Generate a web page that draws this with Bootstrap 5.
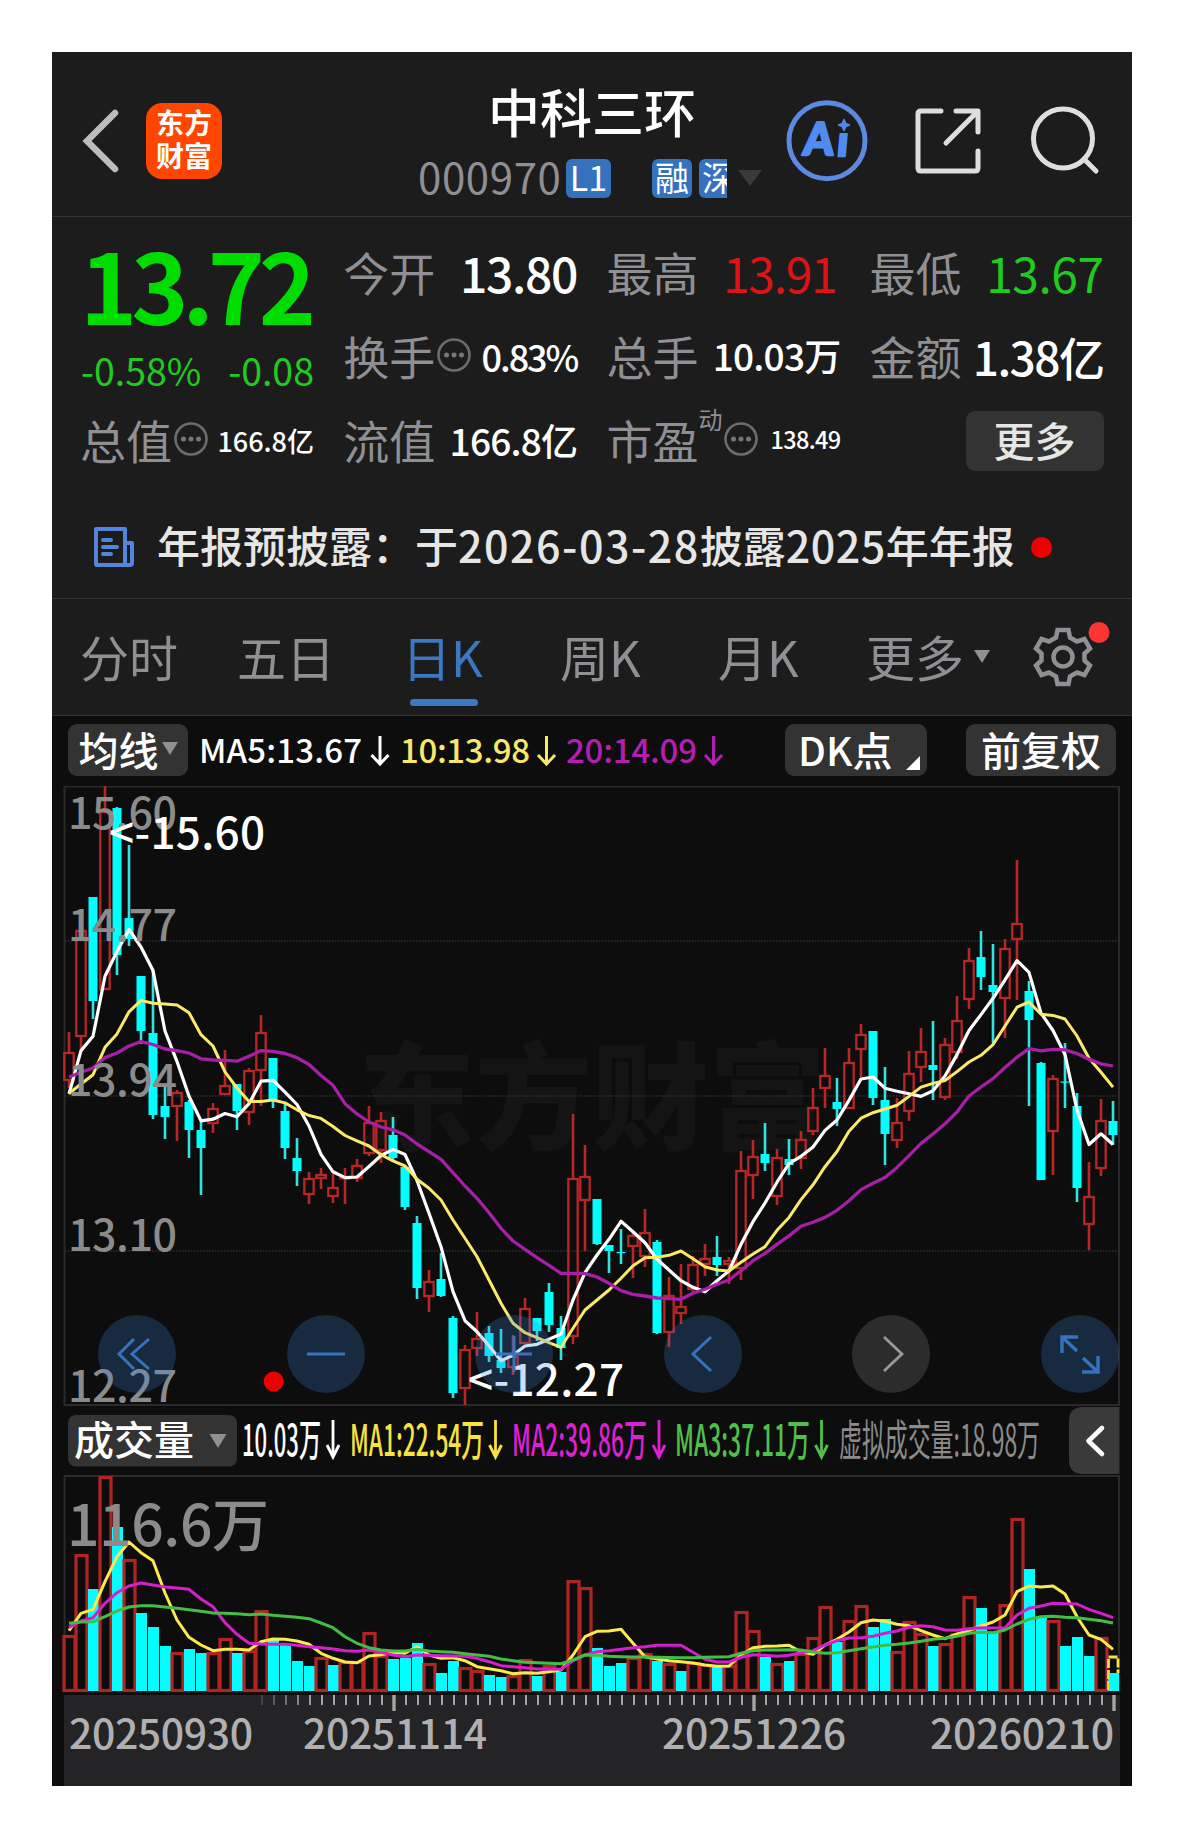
<!DOCTYPE html>
<html lang="zh-CN">
<head>
<meta charset="utf-8">
<meta name="viewport" content="width=device-width, initial-scale=1">
<title>中科三环 000970</title>
<link rel="stylesheet" href="https://cdn.jsdelivr.net/npm/bootstrap@5.3.0/dist/css/bootstrap.min.css">
<style>
body{background:#fff;font-family:"Noto Sans CJK SC",sans-serif;font-weight:500;line-height:1;color:#fff;width:1184px;height:1838px;overflow:hidden}
svg{display:block;flex:none}
.phone{width:1080px;height:1734px;margin:52px;background:#1c1c1c;overflow:hidden}
.rule-b{border-bottom:1px solid #353535}
.top-bar{height:165px;padding:0 0 0 30px}
.top-bar>*{flex:none}
.app-logo{width:76px;height:76px;margin-left:27px;border-radius:16px;background:#ff4500;font-size:28px;line-height:33px;font-weight:700;padding-top:3px;margin-top:13px}
.stock-id{width:345px;margin-left:196px;margin-top:15px}
.stock-name{font-size:52px;height:52px;padding-left:3px;margin-top:-1px}
.stock-code{font-size:42px;font-weight:400;color:#8f8f94;letter-spacing:.6px;width:148px;margin-top:-4px}
.tag-blue{height:39px;border-radius:6px;background:#3472bd;font-size:34px;font-weight:400;flex:none}
.tag-blue span{margin-top:-3px}
.tag-clip{width:28px;overflow:hidden;border-radius:6px 0 0 6px;padding-left:3px}
.tri{width:0;height:0;border:solid transparent;border-bottom-width:0}
.quote{display:grid;grid-template-columns:repeat(4,233px);grid-template-rows:repeat(3,84.3px);column-gap:30.2px;padding:12px 28px 0 29px;height:297px}
.quote .big{grid-row:span 2}
.cell-q{display:flex;align-items:center;justify-content:space-between;white-space:nowrap}
.cell-q>span:last-child{padding-top:1px}
.lbl{font-size:46px;font-weight:400;color:#8f8f94;display:flex;align-items:center;margin:-1px 0 0 -1px}
.lbl svg{margin-left:1px}
.price-now{font-size:97px;font-weight:700;color:#00db00;letter-spacing:-6.1px;height:97px;margin:5px 0 0 -1px}
.up{color:#dc1414!important}.down{color:#20cb20!important}
.f48{font-size:48px;letter-spacing:-1.3px}.f45{font-size:46px;letter-spacing:-1.5px}.f37{font-size:37px;letter-spacing:-.8px}.f27{font-size:27px}.f23{font-size:23.5px;letter-spacing:-.7px}
.f36{font-size:36px;letter-spacing:-2.1px}
.pct{font-size:37.5px;font-weight:400;margin-top:20px}
.sup-d{font-size:24px;align-self:flex-start;margin-top:-9px}
.btn-dark2{background:#333;border-radius:9px;color:#e6e6e6;padding:0 0 3px;line-height:1;font-weight:500;display:flex;align-items:center;justify-content:center}
.notice{height:85px;padding-left:42px;font-size:43px;color:#e6e6e6;white-space:nowrap}
.dg{letter-spacing:1.5px}.dy{letter-spacing:.5px}
.dot{width:21px;height:21px;border-radius:50%;background:#ee0000}
.tabs-k{height:117px;font-size:49px;font-weight:400;color:#8f8f94;padding-left:28px}
.tabs-k>*{flex:none}
.tabs-k .nav-link{padding:0 0 4px;color:inherit;height:116px;display:flex;align-items:center;white-space:nowrap;position:relative}
.tabs-k .active{color:#3a78c2;text-indent:-7px}
.tabs-k .active::after{content:"";position:absolute;left:1px;bottom:9px;width:68px;height:7px;border-radius:4px;background:#3a78c2}
.chart-zone{background:#0d0d0d;height:1070px}
.ma-bar{height:70px;padding:8px 16px 0;font-size:33px;white-space:nowrap}
.ma-bar .btn-dark2{color:#fff;height:52px;font-size:40px}
.chart-svg text{font-family:"Noto Sans CJK SC",sans-serif}
</style>
<script src="https://cdn.jsdelivr.net/npm/bootstrap@5.3.0/dist/js/bootstrap.bundle.min.js"></script>
</head>
<body>
<main class="phone">
  <header class="top-bar rule-b d-flex align-items-center">
    <svg width="37" height="66" viewBox="0 0 37 66" style="margin-top:13px"><path d="M33 5 5 33l28 28" fill="none" stroke="#bdbdbd" stroke-width="6.5" stroke-linecap="round"/></svg>
    <div class="app-logo text-center">东方<br>财富</div>
    <div class="stock-id">
      <div class="stock-name text-center">中科三环</div>
      <div class="d-flex align-items-center" style="margin-top:22px">
        <span class="stock-code">000970</span>
        <span class="tag-blue d-flex align-items-center justify-content-center" style="width:45px"><span>L1</span></span>
        <span class="tag-blue d-flex align-items-center justify-content-center" style="width:40px;margin-left:41px"><span>融</span></span>
        <span class="tag-blue tag-clip d-flex align-items-center" style="margin-left:7px"><span>深</span></span>
        <i class="tri" style="border-width:16px 12px 0;border-top-color:#3a3a3a;margin-left:11px"></i>
      </div>
    </div>
    <svg width="350" height="90" viewBox="765 96 350 90" style="margin-left:2px;margin-top:14px" fill="none" stroke="#dedede" stroke-width="5" stroke-linecap="round" stroke-linejoin="round">
      <g stroke="#5b8ade"><circle cx="827" cy="140.700" r="38"/></g>
      <g fill="#4f8bf0" stroke="#4f8bf0" stroke-width="2.500"><text x="802" y="155" font-family="Lato, sans-serif" font-weight="900" font-size="45" textLength="30" lengthAdjust="spacingAndGlyphs" transform="translate(14 0) skewX(-5)">A</text><text x="836" y="156.500" font-family="Lato, sans-serif" font-weight="900" font-size="42" textLength="11" transform="translate(14 0) skewX(-5)">ı</text><path d="M844 119.500l1.600 3.900 3.900 1.600-3.900 1.600-1.600 3.900-1.600-3.900-3.900-1.600 3.900-1.600z" stroke-width="1.500"/></g>
      <path d="M941 111H921q-3 0-3 3V168q0 3 3 3H975q3 0 3-3V151M956 111H978V132M977 112 946 143"/>
      <circle cx="1063" cy="138.500" r="29.500"/><path d="M1084 159 1096 171"/>
    </svg>
  </header>

  <section class="quote">
    <div class="big">
      <div class="price-now">13.72</div>
      <div class="d-flex justify-content-between pct down"><span>-0.58%</span><span>-0.08</span></div>
    </div>
    <div class="cell-q"><span class="lbl">今开</span><span class="f48">13.80</span></div>
    <div class="cell-q"><span class="lbl">最高</span><span class="f48 up" style="font-weight:400;padding-right:4px">13.91</span></div>
    <div class="cell-q"><span class="lbl">最低</span><span class="f48 down" style="font-weight:400;letter-spacing:-.5px">13.67</span></div>
    <div class="cell-q"><span class="lbl">换手<svg width="36" height="36" viewBox="-18 -18 36 36"><circle r="15.500" fill="none" stroke="#6c6c6c" stroke-width="2.600"/><g fill="#777"><circle cx="-7.500" r="2.500"/><circle r="2.500"/><circle cx="7.500" r="2.500"/></g></svg></span><span class="f36">0.83%</span></div>
    <div class="cell-q"><span class="lbl">总手</span><span class="f37">10.03万</span></div>
    <div class="cell-q"><span class="lbl">金额</span><span class="f45">1.38亿</span></div>
    <div class="cell-q"><span class="lbl">总值<svg width="36" height="36" viewBox="-18 -18 36 36"><circle r="15.500" fill="none" stroke="#6c6c6c" stroke-width="2.600"/><g fill="#777"><circle cx="-7.500" r="2.500"/><circle r="2.500"/><circle cx="7.500" r="2.500"/></g></svg></span><span class="f27">166.8亿</span></div>
    <div class="cell-q"><span class="lbl">流值</span><span class="f37">166.8亿</span></div>
    <div class="cell-q"><span class="lbl">市盈<span class="sup-d">动</span><svg width="36" height="36" viewBox="-18 -18 36 36"><circle r="15.500" fill="none" stroke="#6c6c6c" stroke-width="2.600"/><g fill="#777"><circle cx="-7.500" r="2.500"/><circle r="2.500"/><circle cx="7.500" r="2.500"/></g></svg></span><span class="f23">138.49</span></div>
    <div class="d-flex align-items-center justify-content-end"><button class="btn btn-dark2" style="width:138px;height:60px;font-size:41px;margin-top:2px">更多</button></div>
  </section>

  <section class="notice rule-b d-flex align-items-start">
    <svg width="40" height="42" viewBox="0 0 40 42" style="margin-top:12px" fill="none" stroke="#5285de" stroke-width="4" stroke-linejoin="round" stroke-linecap="round"><path d="M2 3H31V39H3Q2 39 2 38zM31 17H38V37Q38 39 36 39H31M9 14H17M9 21H23M9 28H17"/></svg>
    <span style="margin:9px 0 0 23px">年报预披露：于<span class="dg">2026-03-28</span>披露<span class="dy">2025</span>年年报</span>
    <i class="dot" style="margin:23px 0 0 16px"></i>
  </section>

  <nav class="tabs-k rule-b nav flex-nowrap align-items-center">
    <a class="nav-link" style="width:157px">分时</a><a class="nav-link" style="width:172px">五日</a>
    <a class="nav-link active" style="width:151px">日K</a><a class="nav-link" style="width:158px">周K</a>
    <a class="nav-link" style="width:148px">月K</a><a class="nav-link" style="width:156px">更多<i class="tri" style="border-width:13px 8px 0;border-top-color:#8f8f94;margin-left:10px;margin-top:3px"></i></a>
    <svg width="90" height="80" viewBox="1022 617 90 80"><g fill="none" stroke="#8f8f94" stroke-width="4.500"><path d="M1057.500 630h11l1.500 7.500 7 4 7.500-2.500 5.500 9.500-5.500 5v7l5.500 5-5.500 9.500-7.500-2.500-7 4-1.500 7.500h-11l-1.500-7.500-7-4-7.500 2.500-5.500-9.500 5.500-5v-7l-5.500-5 5.500-9.500 7.500 2.500 7-4z"/><circle cx="1063" cy="657" r="9.500"/></g><circle cx="1099" cy="632.500" r="10.500" fill="#fa3534"/></svg>
  </nav>

  <section class="chart-zone">
    <div class="ma-bar d-flex align-items-start">
      <button class="btn btn-dark2" style="width:120px">均线<i class="tri" style="border-width:13px 8.500px 0;border-top-color:#8f8f94;margin-left:3px"></i></button>
      <svg class="chart-svg" width="540" height="52" viewBox="188 724 540 52" font-size="33" font-weight="500"><g fill="#fff"><text x="199" y="763" textLength="163">MA5:13.67</text></g><text x="400" y="763" textLength="130" fill="#f8e768">10:13.98</text><text x="566" y="763" textLength="131" fill="#b31fb3">20:14.09</text>
      <g fill="none" stroke-width="3"><path stroke="#fff" d="M380 736v28m-8.500-9 8.500 9 8.500-9"/><path stroke="#f8e768" d="M546.500 736v28m-8.500-9 8.500 9 8.500-9"/><path stroke="#b31fb3" d="M713.500 736v28m-8.500-9 8.500 9 8.500-9"/></g></svg>
      <button class="btn btn-dark2 justify-content-start" style="width:142px;margin-left:57px;padding-left:12px">DK点<svg width="14" height="14" style="margin:28px 0 0 13px"><path d="M14 0V14H0z" fill="#fff"/></svg></button>
      <button class="btn btn-dark2" style="width:150px;margin-left:39px">前复权</button>
    </div>
    <svg class="chart-svg" id="chart" width="1080" height="1000" viewBox="52 786 1080 1000"></svg>
  </section>
</main>
<script>
const X0=69,STEP=12,CY='#00ffff',RD='#b92626';
// one row per trading day: high, body top, body bottom, low (chart units); r = rising, c = falling
const K=`r1032 1052 1080 1088|r930 930 1036 1049|c897 897 1001 1019|r786 811 989 989|c807 808 955 975|c845 918 939 946|c976 976 1031 1044|c970 1033 1115 1119|c1084 1106 1117 1139|r1090 1092 1106 1141|c1100 1102 1130 1158|c1122 1130 1148 1195|r1103 1108 1123 1133|r1050 1085 1094 1094|c1084 1084 1111 1130|r1068 1070 1112 1125|r1015 1032 1070 1106|c1058 1058 1101 1108|c1102 1111 1148 1159|c1138 1158 1171 1186|r1172 1178 1194 1204|r1168 1174 1178 1189|r1174 1187 1196 1203|r1168 1177 1177.500 1204|r1159 1165 1178 1182|r1106 1122 1153 1156|r1112 1120 1150 1163|c1117 1135 1158 1162|c1166 1167 1207 1210|c1216 1223 1288 1299|r1270 1281 1296 1312|c1253 1279 1296 1297|c1316 1318 1393 1398|r1345 1349 1388 1405|r1312 1338 1348 1356|c1326 1333 1356 1362|c1329 1360 1368 1373|r1335 1356 1367 1375|r1298 1308 1343 1344|c1318 1318 1331 1341|c1283 1292 1325 1332|c1316 1328 1348 1360|r1114 1178 1336 1344|r1145 1176 1200 1251|c1199 1199 1244 1245|c1245 1245 1251 1273|c1229 1252 1253 1264|r1231 1235 1246 1278|r1209 1232 1256 1267|c1240 1242 1333 1334|r1277 1295 1332 1347|r1264 1306 1313 1324|r1256 1264 1289 1292|r1244 1258 1264 1276|c1236 1257 1265 1276|r1257 1260 1264 1284|r1151 1170 1268 1280|r1140 1156 1175 1199|c1123 1154 1163 1171|r1149 1157 1196 1205|c1139 1159 1165 1175|r1131 1139 1158 1169|r1088 1107 1131 1135|r1048 1075 1088 1108|c1078 1102 1109 1126|r1048 1062 1108 1108|r1024 1034 1049 1077|c1031 1031 1098 1105|c1067 1100 1134 1165|r1098 1122 1140 1148|r1051 1073 1111 1121|r1028 1051 1067 1082|c1021 1065 1070 1100|r1038 1044 1097 1100|r996 1020 1052 1059|r948 960 999 1009|c931 957 977 990|c944 985 992 1043|r939 948 998 1038|r860 923 939 1000|c981 991 1020 1106|c1062 1063 1180 1180|r1075 1078 1131 1175|c1043 1081.500 1082.500 1108|c1093 1106 1188 1202|r1162 1196 1224 1250|r1099 1120 1168 1176|c1101 1121 1135 1145`.split('|').map(s=>[s[0],...s.slice(1).split(' ').map(Number)]);
const MA5=[1094,1050.6,1036.3,976.3,951.4,929.4,947,970.6,1031,1061.6,1096.3,1120.8,1119.2,1113.5,1116.7,1103.7,1081.2,1080.4,1092.2,1104.5,1126,1154.3,1171.8,1177.6,1177,1166.5,1155.5,1149.4,1154.5,1180.7,1213.3,1246.7,1291.7,1320.7,1331.7,1345.7,1360.7,1355,1346,1344.3,1339.3,1334,1300,1272.7,1255,1239.3,1221.3,1231.7,1242.7,1259.3,1270,1280.7,1287.3,1291.7,1280.7,1271,1244.3,1221.7,1203,1182.2,1163.7,1156.3,1147,1130.4,1120,1100.4,1079,1077,1088.2,1091.2,1093.8,1096.4,1090.8,1076,1054.6,1030.5,1014.6,998.3,979.8,960.6,972.4,1013.1,1030.5,1054.6,1110,1144.5,1133.8,1144.5];
const MA10=[1093.5,1084,1074.7,1047.3,1033.9,1011.8,1000.4,1003.3,1004,1005,1012.7,1034.7,1046,1071.8,1088,1101.6,1101.6,1100,1102.9,1109.8,1115.5,1118.4,1126.5,1135.5,1140.8,1146,1154.7,1160.8,1166,1179.3,1188.3,1200,1220,1238.3,1256.7,1280,1303.3,1323.3,1332.7,1337.7,1342.7,1347.3,1328.3,1310,1300,1290,1278.3,1265.7,1257.7,1257.3,1255.3,1251,1258.7,1266.7,1270,1271,1262.3,1254,1246.7,1230.3,1217.4,1199.6,1184.8,1166.7,1151.5,1131.2,1118.2,1112.7,1109,1105.3,1096.4,1087.1,1083.4,1080.5,1071.6,1062,1055.3,1044.6,1026,1007.2,1002,1014.3,1015.4,1019,1036,1058.3,1072.3,1087.1];
const MA20=[1077,1072.2,1068,1057.6,1053,1046,1041.6,1044.5,1049,1050.6,1053,1058.8,1060,1060.4,1061.2,1056.3,1050.6,1051.4,1053.5,1057.6,1064.5,1075.5,1085.3,1103.7,1113.9,1122,1127,1129.8,1135,1144,1151.7,1159.3,1172.7,1186,1198.3,1212.7,1228.3,1241,1249.3,1257.7,1265.3,1273.3,1273.3,1273.7,1277,1283.3,1290.7,1294.3,1296,1298,1298.7,1299.3,1293.3,1289.3,1284.3,1280,1270.7,1260.7,1253.3,1244.4,1235.9,1226.2,1222.2,1217.4,1210.3,1200.7,1189.6,1183.3,1177.4,1167.4,1155.6,1143.4,1134,1123.8,1111.9,1096,1087,1078.6,1067.5,1057.2,1048.7,1050.9,1049.4,1049.8,1053.5,1059.4,1063.8,1066];
const VOL=[1635,1554,1589,1476,1527,1559,1613,1627,1646,1652,1649,1653,1652,1638,1653,1650,1610,1640,1645,1661,1666,1657,1665,1661,1661,1632,1655,1659,1658,1643,1663,1673,1661,1667,1670,1675,1677,1675,1659,1676,1665,1672,1580,1587,1648,1666,1663,1657,1653,1661,1663,1671,1662,1664,1665,1665,1611,1630,1657,1663,1661,1653,1637,1606,1642,1620,1605,1627,1619,1651,1621,1633,1646,1643,1633,1596,1608,1633,1604,1518,1569,1617,1620,1646,1637,1656,1637,1673];
const V1=[1630.7,1613.3,1609.3,1581.7,1556.7,1542,1552.7,1560.7,1593,1620,1637.3,1645,1650.7,1649.3,1649.3,1650,1641.7,1639,1639.3,1641,1644.3,1653.3,1658.3,1662,1662.7,1656,1654.7,1652.3,1653.3,1646.7,1655,1658.3,1657.7,1660.7,1666.7,1668.7,1670.7,1673.7,1672.7,1673.3,1671.7,1670,1655,1636.7,1631.3,1631,1629.3,1643.3,1656.7,1659,1660.7,1661.7,1663,1665,1666.3,1666,1655,1647.7,1646.3,1646,1645.3,1651.7,1654.3,1645,1639.3,1632,1622.7,1620,1621.3,1624.3,1625.7,1630.7,1635,1638.7,1634,1630.7,1626,1622,1615,1591.7,1586,1587,1586,1594,1616.7,1635,1639.3,1649.3];
const V2=[1627.3,1621,1617.7,1603.3,1592.7,1586,1583,1585,1587,1588,1589.3,1599,1606.7,1622.7,1634.3,1643.3,1644,1644.3,1644.3,1645.3,1646.7,1647.7,1649,1650.7,1651.3,1650,1652.3,1655,1656.7,1655,1655.3,1655.7,1656,1656.3,1658.3,1661.7,1665.7,1666.7,1667.7,1669,1669,1669.3,1660.7,1655,1651.7,1650.7,1649.3,1647.7,1646.7,1645.3,1645.3,1645.3,1652.3,1659.3,1662,1662,1657.3,1654.7,1655.3,1656.3,1655.3,1652.7,1650.7,1645,1640.7,1638,1637.7,1636.3,1633.3,1631,1627.3,1625.7,1626.7,1630,1630.3,1628.7,1627.7,1628,1627.7,1615,1608.3,1606,1603.3,1603.7,1604,1609.3,1613.3,1617.7];
const V3=[1623.3,1622,1621.7,1616.7,1611,1607,1605.7,1605.7,1607,1608.3,1609.7,1611.3,1613,1613.3,1613.7,1614.7,1614,1615.3,1616.3,1617.3,1618.7,1623,1627.7,1636.7,1643.3,1647.7,1650,1651,1651,1649.3,1651,1651.7,1652.3,1653.7,1655,1656.3,1659,1660.7,1662.3,1662.7,1663.3,1663.7,1660,1655,1655.3,1656.3,1656.7,1657,1657,1657.3,1657.5,1657.7,1657.7,1657.3,1657,1656.7,1653.3,1650.7,1650,1650,1649.7,1650,1652,1653.3,1652.7,1650.7,1648.7,1647,1645.3,1644.3,1643,1641.3,1639.3,1638.3,1636.3,1633.3,1632.3,1632.7,1630,1624,1619.3,1616.7,1616.3,1617.3,1617.7,1619.3,1620.7,1623];
const flip={5:'r',40:'r',20:'c',22:'c',51:'c',85:'c'};   // volume colour differs from the candle on these days
const x=i=>X0+STEP*i;
const line=(a,c,w)=>`<polyline fill="none" stroke="${c}" stroke-width="${w}" stroke-linejoin="round" points="${a.map((y,i)=>x(i)+','+y).join(' ')}"/>`;
const txt=(s,tx,y,size,len,fill,extra='')=>`<text x="${tx}" y="${y}" font-size="${size}" fill="${fill}" ${len?`textLength="${len}"`:''} ${extra}>${s}</text>`;
let h='';
// frames, grid and watermark
h+=txt('东方财富',358,1141,117,468,'#141414','font-weight="900"');
h+='<g fill="none" stroke="#2a2a2a" stroke-width="2"><path d="M64.500 1405V786.500H1119V1405zM64.500 1691V1476H1119V1691"/></g>';
for(const y of [941,1096,1251])h+=`<path d="M65 ${y}H1119" stroke="#303030" stroke-width="1.500" stroke-dasharray="1.500 1.500"/>`;
// candles
K.forEach(([t,hi,a,b,lo],i)=>{const c=x(i);
 if(t=='c')h+=`<path d="M${c} ${hi}V${lo}" stroke="#2fe3e3" stroke-width="2.600"/><rect x="${c-4.5}" y="${a}" width="9" height="${Math.max(1.2,b-a)}" fill="${CY}"/>`;
 else h+=`<path d="M${c} ${hi}V${a}M${c} ${b}V${lo}" stroke="${RD}" stroke-width="2.600"/><rect x="${c-4.7}" y="${a+1}" width="9.400" height="${Math.max(.5,b-a-1)}" fill="none" stroke="${RD}" stroke-width="2.300"/>`;});
h+=line(MA5,'#fff',3.2)+line(MA10,'#fbe96a',3)+line(MA20,'#a81ea8',3.3);
[['15.60',829],['14.77',941],['13.94',1096],['13.10',1251],['12.27',1402]].forEach(([s,y])=>h+=txt(s,68,y,43,109,'#8b8b8b'));
h+=txt('&lt;-15.60',109,849,44,156,'#fff','font-weight="500"')+txt('&lt;-12.27',468,1396,44,156,'#fff','font-weight="500"');
h+='<circle cx="273.700" cy="1381.500" r="10" fill="#ee0000"/>';
// floating chart controls
const icon={137:'M-3-15-18 0-3 15M12-15-5 0 12 15',326:'M-19 0H19',514:'M-18 0H18M0-18V18',703:'M8-17-10 0 8 17',1080:''};
for(const c in icon)h+=`<g transform="translate(${c} 1354)"><circle r="39" fill="#3c82dc" fill-opacity=".25"/><path d="${icon[c]}" fill="none" stroke="#3673be" stroke-width="3"/></g>`;
h+='<g transform="translate(891 1354)"><circle r="39" fill="#2c2c2c"/><path d="M-7-17 11 0-7 17" fill="none" stroke="#999" stroke-width="2.800"/></g>';
h+='<g transform="translate(1080 1354)" fill="none" stroke="#3673be" stroke-width="3.400"><path d="M-2-17H-18V-1M-18-17-3-3M2 18H18V2M18 18 3 4"/></g>';
// volume header
h+='<rect x="68" y="1415" width="169" height="51.500" rx="8" fill="#333"/>'+txt('成交量',74,1455,40,120,'#fff','font-weight="500"')+'<path d="M209.500 1434h17l-8.500 14z" fill="#8f8f94"/>';
[['10.03万',242,79,'#fff',333],['MA1:22.54万',350,134,'#f8e33f',495.500],['MA2:39.86万',512,135,'#dd20d2',659],['MA3:37.11万',675,135,'#4fc04b',821.500],['虚拟成交量:18.98万',839,201,'#8b8b8b',0]].forEach(([s,tx,w,c,ar])=>{
 h+=txt(s,tx,1455.5,43,w,c,`lengthAdjust="spacingAndGlyphs" font-weight="${ar?500:400}"`);
 if(ar)h+=`<path d="M${ar} 1420v37m-6-12 6 12 6-12" fill="none" stroke="${c}" stroke-width="2.800"/>`;});
h+='<path d="M1119.500 1407H1083q-14 0-14 14v39q0 14 14 14H1119.500z" fill="#3a3a3a"/><path d="M1102 1428 1088.500 1441 1102 1454" fill="none" stroke="#fff" stroke-width="4.600" stroke-linecap="round" stroke-linejoin="round"/>';
// volume bars
VOL.forEach((v,i)=>{const t=flip[i]||K[i][0],c=x(i);
 h+=t=='c'?`<rect x="${c-5}" y="${v}" width="11" height="${1691-v}" fill="${CY}"/>`:`<rect x="${c-5}" y="${v+1.5}" width="11" height="${1689.5-v-.5}" fill="none" stroke="#b22424" stroke-width="3.200"/>`;});
h+='<path d="M1108.500 1690V1657H1118V1673" fill="none" stroke="#f8e33f" stroke-width="2.800" stroke-dasharray="9 2"/><rect x="1109" y="1673" width="10" height="18" fill="#00ffff"/>';
h+=line(V1,'#fce94e',3)+line(V2,'#d51fcf',3)+line(V3,'#44bd47',3);
h+=txt('116.6万',67,1546,57,202,'#8b8b8b');
// date axis
h+='<rect x="64" y="1695" width="1056" height="91" fill="#242426"/>';
for(let k=0;k<72;k++){const big=k==11||k==41||k==71;h+=`<path d="M${262+12*k} 1695v${big?16:10}" stroke="#a5a5a5" stroke-width="${big?3.4:2}" opacity="${Math.min(1,.25+k*.17)}"/>`;}
[['20250930',69],['20251114',303],['20251226',662],['20260210',930]].forEach(([s,tx])=>h+=txt(s,tx,1749,41,184,'#b0b0b2'));
document.getElementById('chart').innerHTML=h;
</script>
</body>
</html>
